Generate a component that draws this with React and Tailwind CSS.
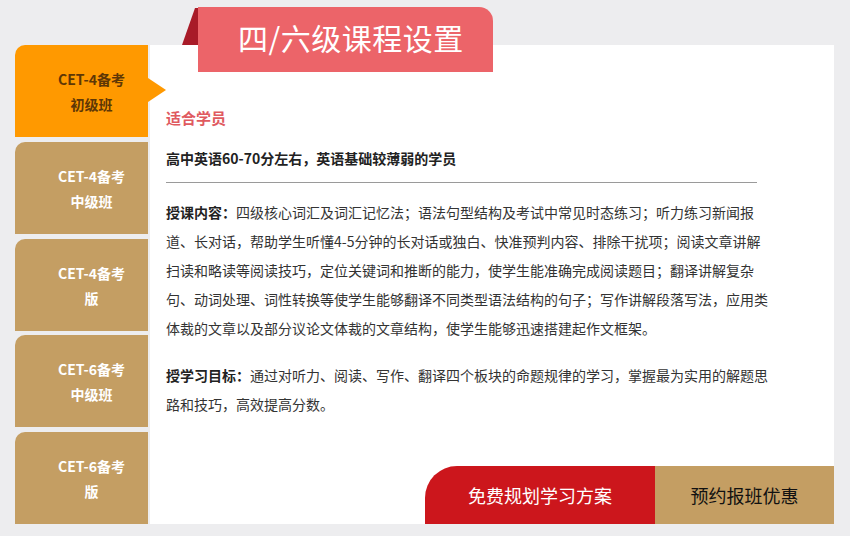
import React from "react";

const tabs = [
  { a: "CET-4备考", b: "初级班", active: true },
  { a: "CET-4备考", b: "中级班" },
  { a: "CET-4备考", b: "版" },
  { a: "CET-6备考", b: "中级班" },
  { a: "CET-6备考", b: "版" },
];

const p1 = [
  "四级核心词汇及词汇记忆法；语法句型结构及考试中常见时态练习；听力练习新闻报",
  "道、长对话，帮助学生听懂4-5分钟的长对话或独白、快准预判内容、排除干扰项；阅读文章讲解",
  "扫读和略读等阅读技巧，定位关键词和推断的能力，使学生能准确完成阅读题目；翻译讲解复杂",
  "句、动词处理、词性转换等使学生能够翻译不同类型语法结构的句子；写作讲解段落写法，应用类",
  "体裁的文章以及部分议论文体裁的文章结构，使学生能够迅速搭建起作文框架。",
];

const p2 = [
  "通过对听力、阅读、写作、翻译四个板块的命题规律的学习，掌握最为实用的解题思",
  "路和技巧，高效提高分数。",
];

export default function App() {
  return (
    <div
      className="relative w-[850px] h-[536px] bg-[#ededef] overflow-hidden pt-[45px]"
      style={{ fontFamily: '"Microsoft YaHei", "Noto Sans CJK SC", "Noto Sans", sans-serif' }}
    >
      <div className="flex pl-[15px] gap-[2px]">
        {/* sidebar */}
        <div className="w-[133px] flex flex-col gap-[4.75px]">
          {tabs.map((t, i) => (
            <div
              key={i}
              className={`relative h-[92px] rounded-tl-[10px] flex flex-col items-center justify-center pl-[20px] pt-[2px] text-[14px] font-bold leading-[25px] ${
                t.active ? "bg-[#ff9900] text-[#5e3706]" : "bg-[#c49e63] text-white"
              }`}
            >
              <div>{t.a}</div>
              <div>{t.b}</div>
              {t.active && (
                <div className="absolute left-full top-[33px] w-0 h-0 border-l-[18px] border-l-[#ff9900] border-y-[12.5px] border-y-transparent z-10" />
              )}
            </div>
          ))}
        </div>

        {/* panel */}
        <div className="w-[684px] h-[479px] bg-white flex flex-col pl-[16px]">
          <div className="mt-[63px] text-[15px] leading-[20px] font-bold text-[#e05a5f]">适合学员</div>
          <div className="mt-[20px] text-[14px] leading-[20px] font-bold text-[#222]">
            高中英语60-70分左右，英语基础较薄弱的学员
          </div>
          <div className="mt-[14px] w-[591px] border-t border-[#9a9a9a]" />
          <div className="mt-[15px] text-[14px] leading-[29px] text-[#333]">
            {p1.map((l, i) => (
              <div key={i} className="whitespace-nowrap">
                {i === 0 && <span className="font-bold text-[#222]">授课内容：</span>}
                {l}
              </div>
            ))}
          </div>
          <div className="mt-[18px] text-[14px] leading-[29px] text-[#333]">
            {p2.map((l, i) => (
              <div key={i} className="whitespace-nowrap">
                {i === 0 && <span className="font-bold text-[#222]">授学习目标：</span>}
                {l}
              </div>
            ))}
          </div>
          <div className="mt-auto flex justify-end">
            <div className="w-[230px] h-[58px] bg-[#cc161c] rounded-tl-[32px] flex items-center justify-center text-white text-[18px]">
              免费规划学习方案
            </div>
            <div className="w-[179px] h-[58px] bg-[#c49e63] flex items-center justify-center text-[#111] text-[18px]">
              预约报班优惠
            </div>
          </div>
        </div>
      </div>

      {/* title tab overlay */}
      <svg className="absolute left-[181px] top-[7px]" width="18" height="39" viewBox="0 0 18 39">
        <polygon points="14,1 18,1 18,38 1,38" fill="#a81b28" />
      </svg>
      <div className="absolute left-[198px] top-[7px] w-[295px] h-[65px] bg-[#ec6469] rounded-tr-[14px] flex items-center pl-[40px] pb-[5px]">
        <span className="text-white text-[30px] leading-none tracking-[0.5px] font-normal">四/六级课程设置</span>
      </div>
    </div>
  );
}
